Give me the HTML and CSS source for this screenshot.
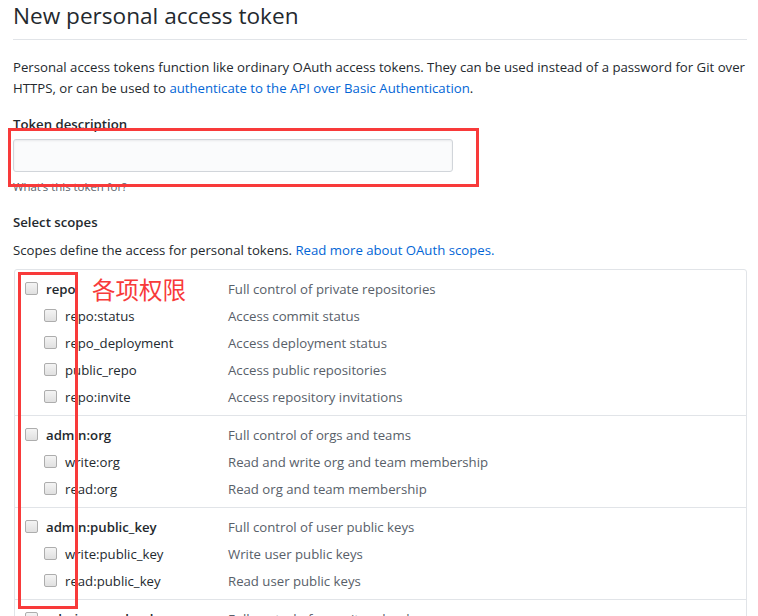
FILE: index.html
```html
<!DOCTYPE html>
<html lang="en">
<head>
<meta charset="utf-8">
<title>New personal access token</title>
<link rel="stylesheet" href="styles.css">
</head>
<body>
<div class="page">
  <h1 class="title">New personal access token</h1>
  <p class="intro">Personal access tokens function like ordinary OAuth access tokens. They can be used instead of a password for Git over HTTPS, or can be used to <a class="link" href="#">authenticate to the API over Basic Authentication</a>.</p>

  <div class="form-group">
    <label class="field-label" for="desc">Token description</label>
    <input class="input" id="desc" type="text">
    <p class="note">What’s this token for?</p>
    <div class="annot annot-input"></div>
  </div>

  <div class="scopes-section">
    <h2 class="section-label">Select scopes</h2>
    <p class="section-desc">Scopes define the access for personal tokens. <a class="link" href="#">Read more about OAuth scopes.</a></p>

    <div class="scopes-wrap">
      <div class="scopes">
        <div class="group">
          <div class="row parent"><label class="name"><input type="checkbox" class="cb">repo</label><span class="desc">Full control of private repositories</span></div>
          <div class="row child"><label class="name"><input type="checkbox" class="cb">repo:status</label><span class="desc">Access commit status</span></div>
          <div class="row child"><label class="name"><input type="checkbox" class="cb">repo_deployment</label><span class="desc">Access deployment status</span></div>
          <div class="row child"><label class="name"><input type="checkbox" class="cb">public_repo</label><span class="desc">Access public repositories</span></div>
          <div class="row child"><label class="name"><input type="checkbox" class="cb">repo:invite</label><span class="desc">Access repository invitations</span></div>
        </div>
        <div class="group">
          <div class="row parent"><label class="name"><input type="checkbox" class="cb">admin:org</label><span class="desc">Full control of orgs and teams</span></div>
          <div class="row child"><label class="name"><input type="checkbox" class="cb">write:org</label><span class="desc">Read and write org and team membership</span></div>
          <div class="row child"><label class="name"><input type="checkbox" class="cb">read:org</label><span class="desc">Read org and team membership</span></div>
        </div>
        <div class="group">
          <div class="row parent"><label class="name"><input type="checkbox" class="cb">admin:public_key</label><span class="desc">Full control of user public keys</span></div>
          <div class="row child"><label class="name"><input type="checkbox" class="cb">write:public_key</label><span class="desc">Write user public keys</span></div>
          <div class="row child"><label class="name"><input type="checkbox" class="cb">read:public_key</label><span class="desc">Read user public keys</span></div>
        </div>
        <div class="group">
          <div class="row parent"><label class="name"><input type="checkbox" class="cb">admin:repo_hook</label><span class="desc">Full control of repository hooks</span></div>
          <div class="row child"><label class="name"><input type="checkbox" class="cb">write:repo_hook</label><span class="desc">Write repository hooks</span></div>
          <div class="row child"><label class="name"><input type="checkbox" class="cb">read:repo_hook</label><span class="desc">Read repository hooks</span></div>
        </div>
      </div>
      <div class="annot annot-checks"></div>
      <div class="annot-text">各项权限</div>
    </div>
  </div>
</div>
</body>
</html>
```

FILE: styles.css
```css
* { box-sizing: border-box; }

html, body {
  margin: 0;
  background: #fff;
  overflow: hidden;
}

body {
  font-family: "Open Sans", "Noto Sans", sans-serif;
  font-size: 13.2px;
  line-height: 21px;
  color: #24292e;
}

.page {
  padding: 0 11px 0 13px;
}

.title {
  margin: 0;
  padding: 1px 0 8px;
  font-size: 22.6px;
  font-weight: 400;
  line-height: 30px;
  border-bottom: 1px solid #e1e4e8;
}

.intro {
  margin: 17px 0 15px;
}

.link {
  color: #0366d6;
  text-decoration: none;
}

.form-group {
  position: relative;
}

.field-label {
  display: block;
  font-weight: 600;
  margin-bottom: 4px;
}

.input {
  display: block;
  width: 440px;
  height: 33px;
  margin: 0;
  padding: 6px 8px;
  background: #fafbfc;
  border: 1px solid #d1d5da;
  border-radius: 3px;
  box-shadow: inset 0 1px 2px rgba(27, 31, 35, 0.075);
  font: inherit;
}

.note {
  margin: 6px 0 0;
  font-size: 11.4px;
  line-height: 18px;
  color: #586069;
}

.annot {
  position: absolute;
  border: 3px solid #f83a3a;
}

.annot-input {
  left: -5px;
  top: 14px;
  width: 471px;
  height: 59px;
}

.section-label {
  margin: 16px 0 7px;
  font-size: 13.2px;
  font-weight: 600;
  line-height: 21px;
}

.section-desc {
  margin: 0 0 8px;
}

.scopes-wrap {
  position: relative;
}

.scopes {
  margin-left: 1px;
  border: 1px solid #e1e4e8;
  border-radius: 3px;
}

.group {
  padding: 6px 0 4px 10px;
}

.group + .group {
  border-top: 1px solid #e1e4e8;
}

.row {
  display: grid;
  grid-template-columns: 203px 1fr;
  align-items: center;
  height: 27px;
}

.name {
  display: flex;
  align-items: center;
  gap: 8px;
  color: #24292e;
}

.parent .name {
  font-weight: 600;
}

.child .name {
  padding-left: 19px;
}

.desc {
  color: #586069;
}

.cb {
  appearance: none;
  -webkit-appearance: none;
  flex: none;
  width: 13px;
  height: 13px;
  margin: -3px 0 0;
  border: 1px solid #adadad;
  border-radius: 2px;
  background: linear-gradient(#f4f4f4, #e0e0e0);
}

.annot-checks {
  left: 5px;
  top: 3px;
  width: 60px;
  height: 337px;
}

.annot-text {
  position: absolute;
  left: 79px;
  top: 4px;
  font-family: "Noto Sans CJK SC", sans-serif;
  font-size: 23.5px;
  line-height: 32px;
  color: #f83a3a;
}
```
